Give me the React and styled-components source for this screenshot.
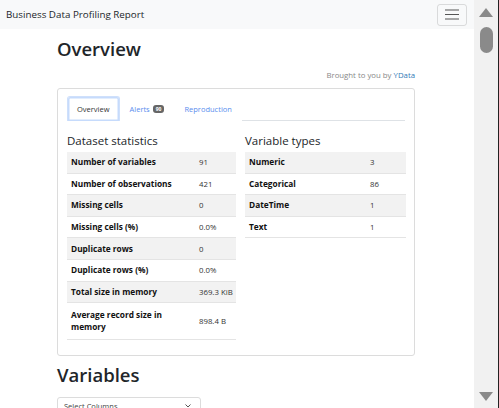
import styled, { createGlobalStyle } from "styled-components";

const Global = createGlobalStyle`
  html, body { margin: 0; padding: 0; overflow: hidden; }
  body { font-family: "Open Sans", "Noto Sans", sans-serif; color: #212529; background: #fff; }
`;

const Page = styled.div`
  display: flex;
  width: 499px;
  height: 408px;
  overflow: hidden;
`;

const Main = styled.div`
  flex: 1;
  min-width: 0;
  overflow: hidden;
`;

const Navbar = styled.nav`
  height: 29px;
  background: #f8f9fa;
  display: flex;
  align-items: center;
  justify-content: space-between;
  padding: 0 7px 0 6px;
`;

const Brand = styled.span`
  font-size: 9.8px;
  color: #212529;
`;

const Toggler = styled.button`
  width: 30px;
  height: 22px;
  border: 1px solid rgba(0, 0, 0, 0.12);
  border-radius: 3px;
  background: transparent;
  display: flex;
  align-items: center;
  justify-content: center;
  padding: 0;
`;

const Container = styled.div`
  width: 358px;
  margin: 0 auto 0 57px;
`;

const H1 = styled.h1`
  font-size: 18.5px;
  font-weight: 600;
  line-height: 24px;
  margin: ${(p) => p.$mt || 0}px 0 0;
  color: #212529;
`;

const Credit = styled.p`
  text-align: right;
  font-size: 7.8px;
  color: #888;
  margin: 9px 0 0;
  line-height: 10px;
`;

const Link = styled.span`
  color: #337ab7;
`;

const Card = styled.div`
  margin-top: 8px;
  border: 1px solid #dcdcdc;
  border-radius: 3px;
  padding: 7px 9px 15px;
`;

const Tabs = styled.div`
  display: flex;
  border-bottom: 1px solid #dee2e6;
  height: 24px;
`;

const Tab = styled.div`
  display: flex;
  align-items: center;
  gap: 3px;
  padding: 0 9px;
  font-size: 7.5px;
  color: ${(p) => (p.$active ? "#333" : "#5a8dee")};
  border: 1px solid ${(p) => (p.$active ? "#cfe0fb" : "transparent")};
  border-bottom: none;
  border-radius: 3px 3px 0 0;
  background: #fff;
  box-shadow: ${(p) => (p.$active ? "0 0 0 1.5px #c6dbfc inset" : "none")};
  margin-bottom: -1px;
`;

const Badge = styled.span`
  background: #666;
  color: #fff;
  font-size: 5px;
  font-weight: 700;
  border-radius: 3px;
  padding: 1px 3px;
  line-height: 6px;
`;

const Columns = styled.div`
  display: grid;
  grid-template-columns: 169px 161px;
  gap: 9px;
  margin-top: 12px;
`;

const H2 = styled.h2`
  font-size: 11.5px;
  font-weight: 500;
  margin: 0 0 3px;
  line-height: 16px;
`;

const Table = styled.div`
  display: flex;
  flex-direction: column;
`;

const Row = styled.div`
  display: grid;
  grid-template-columns: ${(p) => p.$cols};
  align-items: center;
  min-height: 21.6px;
  padding: ${(p) => (p.$tall ? "6px 0" : "3px 0")};
  box-sizing: border-box;
  background: ${(p) => (p.$odd ? "#f2f2f2" : "#fff")};
  border-bottom: 1px solid #e4e4e4;
  font-size: 8.3px;
  line-height: 12px;
`;

const Label = styled.span`
  font-weight: 700;
  padding: 0 6px 0 4px;
  color: #111;
`;

const Value = styled.span`
  color: #333;
  font-size: 7.8px;
`;

const Select = styled.div`
  margin-top: 10px;
  width: 144px;
  height: 18px;
  border: 1px solid #dcdcdc;
  border-radius: 3px;
  display: flex;
  justify-content: space-between;
  align-items: center;
  padding: 0 9px 0 6px;
  box-sizing: border-box;
  font-size: 7.5px;
  color: #444;
`;

const Scrollbar = styled.div`
  width: 25px;
  background: #f1f1f1;
  border-right: 1px solid #222;
  box-sizing: border-box;
  position: relative;
  display: flex;
  flex-direction: column;
  align-items: center;
  padding-top: 8px;
`;

const Thumb = styled.div`
  width: 13px;
  height: 26px;
  border-radius: 7px;
  background: #8a8a8a;
  margin-top: 10px;
`;

const DownArrow = styled.div`
  position: absolute;
  bottom: 7px;
  left: 5px;
  display: flex;
`;

const stats = [
  ["Number of variables", "91"],
  ["Number of observations", "421"],
  ["Missing cells", "0"],
  ["Missing cells (%)", "0.0%"],
  ["Duplicate rows", "0"],
  ["Duplicate rows (%)", "0.0%"],
  ["Total size in memory", "369.3 KiB"],
  ["Average record size in memory", "898.4 B", true],
];

const types = [
  ["Numeric", "3"],
  ["Categorical", "86"],
  ["DateTime", "1"],
  ["Text", "1"],
];

export default function App() {
  return (
    <Page>
      <Global />
      <Main>
        <Navbar>
          <Brand>Business Data Profiling Report</Brand>
          <Toggler>
            <svg width="14" height="11" viewBox="0 0 14 11">
              <path d="M0 1h14M0 5.5h14M0 10h14" stroke="#555" strokeWidth="1" />
            </svg>
          </Toggler>
        </Navbar>
        <Container>
          <H1 $mt={8}>Overview</H1>
          <Credit>
            Brought to you by <Link>YData</Link>
          </Credit>
          <Card>
            <Tabs>
              <Tab $active>Overview</Tab>
              <Tab>
                Alerts <Badge>90</Badge>
              </Tab>
              <Tab>Reproduction</Tab>
            </Tabs>
            <Columns>
              <div>
                <H2>Dataset statistics</H2>
                <Table>
                  {stats.map(([k, v, tall], i) => (
                    <Row key={k} $cols="132px 1fr" $odd={i % 2 === 0} $tall={tall}>
                      <Label>{k}</Label>
                      <Value>{v}</Value>
                    </Row>
                  ))}
                </Table>
              </div>
              <div>
                <H2>Variable types</H2>
                <Table>
                  {types.map(([k, v], i) => (
                    <Row key={k} $cols="125px 1fr" $odd={i % 2 === 0}>
                      <Label>{k}</Label>
                      <Value>{v}</Value>
                    </Row>
                  ))}
                </Table>
              </div>
            </Columns>
          </Card>
          <H1 $mt={7}>Variables</H1>
          <Select>
            <span>Select Columns</span>
            <svg width="6" height="4" viewBox="0 0 6 4">
              <path d="M0.5 0.5L3 3L5.5 0.5" stroke="#555" fill="none" strokeWidth="1" />
            </svg>
          </Select>
        </Container>
      </Main>
      <Scrollbar>
        <svg width="14" height="9" viewBox="0 0 14 9">
          <path d="M7 0L14 9H0Z" fill="#8a8a8a" />
        </svg>
        <Thumb />
        <DownArrow>
          <svg width="14" height="9" viewBox="0 0 14 9">
            <path d="M0 0H14L7 9Z" fill="#8a8a8a" />
          </svg>
        </DownArrow>
      </Scrollbar>
    </Page>
  );
}
